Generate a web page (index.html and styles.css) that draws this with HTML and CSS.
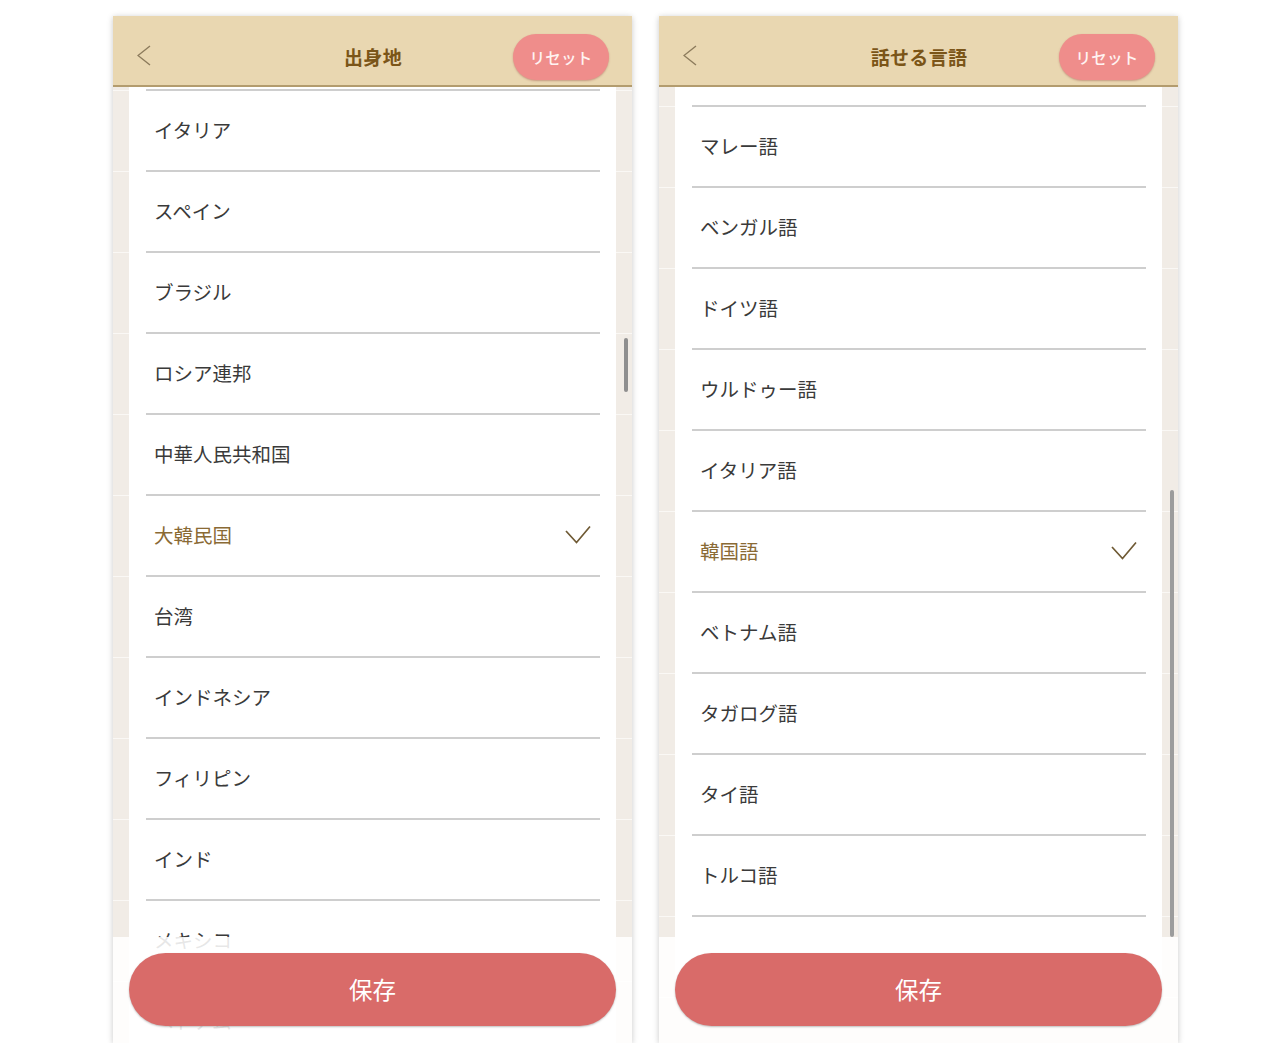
FILE: index.html
```html
<!DOCTYPE html>
<html lang="ja">
<head>
  <meta charset="UTF-8" />
  <meta name="viewport" content="width=device-width, initial-scale=1" />
  <title>出身地 / 話せる言語</title>
  <link rel="stylesheet" href="styles.css">
</head>
<body>
  <div class="screens">

    <!-- 出身地 -->
    <section class="phone">
      <header class="bar">
        <span class="back">
          <svg width="14" height="21" viewBox="0 0 14 21"><polyline points="13,1 1,10.5 13,20" fill="none" stroke="#8c7b5c" stroke-width="1.4"/></svg>
        </span>
        <h1>出身地</h1>
        <button class="reset">リセット</button>
      </header>
      <div class="list">
        <ul class="rows rows-origin">
          <!-- row scrolled above the header -->
          <li class="row"><div class="cell"><div class="label"></div></div></li>
          <li class="row"><div class="cell"><div class="label">イタリア</div></div></li>
          <li class="row"><div class="cell"><div class="label">スペイン</div></div></li>
          <li class="row"><div class="cell"><div class="label">ブラジル</div></div></li>
          <li class="row"><div class="cell"><div class="label">ロシア連邦</div></div></li>
          <li class="row"><div class="cell"><div class="label">中華人民共和国</div></div></li>
          <li class="row selected"><div class="cell"><div class="label"><span>大韓民国</span>
            <svg class="check" width="26" height="19" viewBox="0 0 26 19"><polyline points="1,6 11.5,17.5 25,1.5" fill="none" stroke="#6f5a34" stroke-width="1.7"/></svg></div></div></li>
          <li class="row"><div class="cell"><div class="label">台湾</div></div></li>
          <li class="row"><div class="cell"><div class="label">インドネシア</div></div></li>
          <li class="row"><div class="cell"><div class="label">フィリピン</div></div></li>
          <li class="row"><div class="cell"><div class="label">インド</div></div></li>
          <li class="row"><div class="cell"><div class="label">メキシコ</div></div></li>
          <li class="row"><div class="cell"><div class="label">ベトナム</div></div></li>
        </ul>
      </div>
      <div class="scrollbar scrollbar-origin"></div>
      <footer class="foot">
        <button class="save">保存</button>
      </footer>
    </section>

    <!-- 話せる言語 -->
    <section class="phone">
      <header class="bar">
        <span class="back">
          <svg width="14" height="21" viewBox="0 0 14 21"><polyline points="13,1 1,10.5 13,20" fill="none" stroke="#8c7b5c" stroke-width="1.4"/></svg>
        </span>
        <h1>話せる言語</h1>
        <button class="reset">リセット</button>
      </header>
      <div class="list">
        <ul class="rows rows-lang">
          <!-- row scrolled above the header -->
          <li class="row"><div class="cell"><div class="label"></div></div></li>
          <li class="row"><div class="cell"><div class="label">マレー語</div></div></li>
          <li class="row"><div class="cell"><div class="label">ベンガル語</div></div></li>
          <li class="row"><div class="cell"><div class="label">ドイツ語</div></div></li>
          <li class="row"><div class="cell"><div class="label">ウルドゥー語</div></div></li>
          <li class="row"><div class="cell"><div class="label">イタリア語</div></div></li>
          <li class="row selected"><div class="cell"><div class="label"><span>韓国語</span>
            <svg class="check" width="26" height="19" viewBox="0 0 26 19"><polyline points="1,6 11.5,17.5 25,1.5" fill="none" stroke="#6f5a34" stroke-width="1.7"/></svg></div></div></li>
          <li class="row"><div class="cell"><div class="label">ベトナム語</div></div></li>
          <li class="row"><div class="cell"><div class="label">タガログ語</div></div></li>
          <li class="row"><div class="cell"><div class="label">タイ語</div></div></li>
          <li class="row"><div class="cell"><div class="label">トルコ語</div></div></li>
          <li class="row"><div class="cell"><div class="label"></div></div></li>
        </ul>
      </div>
      <div class="scrollbar scrollbar-lang"></div>
      <footer class="foot">
        <button class="save">保存</button>
      </footer>
    </section>

  </div>
</body>
</html>
```

FILE: styles.css
```css
* {
  box-sizing: border-box;
}
body {
  margin: 0;
  background-color: #fff;
  font-family: "Noto Sans CJK JP", "Noto Sans", sans-serif;
  color: #3a3a3a;
}
.screens {
  display: flex;
  gap: 27px;
  padding: 16px 0 0 113px;
}

/* phone frame */
.phone {
  position: relative;
  width: 519px;
  height: 1027px;
  display: flex;
  flex-direction: column;
  background-color: #f1ece6;
  box-shadow: 0 1px 6px rgba(0, 0, 0, 0.22);
  overflow: hidden;
}

/* header bar */
.bar {
  position: relative;
  z-index: 2;
  flex: none;
  height: 71px;
  padding: 12px 23px 0 24px;
  display: grid;
  grid-template-columns: 1fr auto 1fr;
  align-items: center;
  background-color: #e9d7b1;
  border-bottom: 2px solid #b39c6e;
}
.bar .back {
  justify-self: start;
  display: flex;
  margin-top: -3px;
}
.bar h1 {
  margin: 0;
  font-size: 19px;
  font-weight: 700;
  color: #7b5518;
  letter-spacing: 0.3px;
}
.bar .reset {
  justify-self: end;
  width: 96px;
  height: 46px;
  border: none;
  border-radius: 23px;
  background-color: #ef8d8b;
  color: #fff3f2;
  font-family: inherit;
  font-size: 15.5px;
  font-weight: 500;
  letter-spacing: 0.3px;
  box-shadow: 0 1px 2px rgba(150, 60, 60, 0.4);
  padding: 0;
}

/* list */
.list {
  flex: 1;
  overflow: hidden;
}
.rows {
  list-style: none;
  margin: 0;
  padding: 0;
}
.rows-origin {
  margin-top: -77px;
}
.rows-lang {
  margin-top: -61px;
}
.row {
  height: 81px;
  padding: 0 16px;
  background: linear-gradient(#f1ece6 80px, #faf8f5 80px);
}
.cell {
  height: 100%;
  background-color: #fff;
  padding: 0 16px 0 17px;
}
.label {
  height: 100%;
  display: flex;
  align-items: center;
  justify-content: space-between;
  padding: 0 9px 2px 8px;
  border-bottom: 2px solid #cecece;
  font-size: 19.5px;
  color: #3a3a3a;
}
.row.selected .label {
  color: #8a6a35;
}

/* scroll indicator */
.scrollbar {
  position: absolute;
  left: 511px;
  width: 4px;
  border-radius: 2px;
  background-color: #8f8f8f;
}
.scrollbar-origin {
  top: 322px;
  height: 54px;
}
.scrollbar-lang {
  top: 474px;
  height: 447px;
  background-color: #9c9c9c;
}

/* save footer */
.foot {
  position: absolute;
  z-index: 3;
  left: 0;
  right: 0;
  bottom: 0;
  height: 106px;
  padding: 16px 16px 0;
  background-color: rgba(255, 255, 255, 0.88);
}
.save {
  width: 100%;
  height: 73px;
  border: none;
  border-radius: 37px;
  background-color: #d96b69;
  color: #fff;
  font-family: inherit;
  font-size: 23.5px;
  padding: 0 0 2px;
  box-shadow: 0 1px 2px rgba(0, 0, 0, 0.25);
}
```
